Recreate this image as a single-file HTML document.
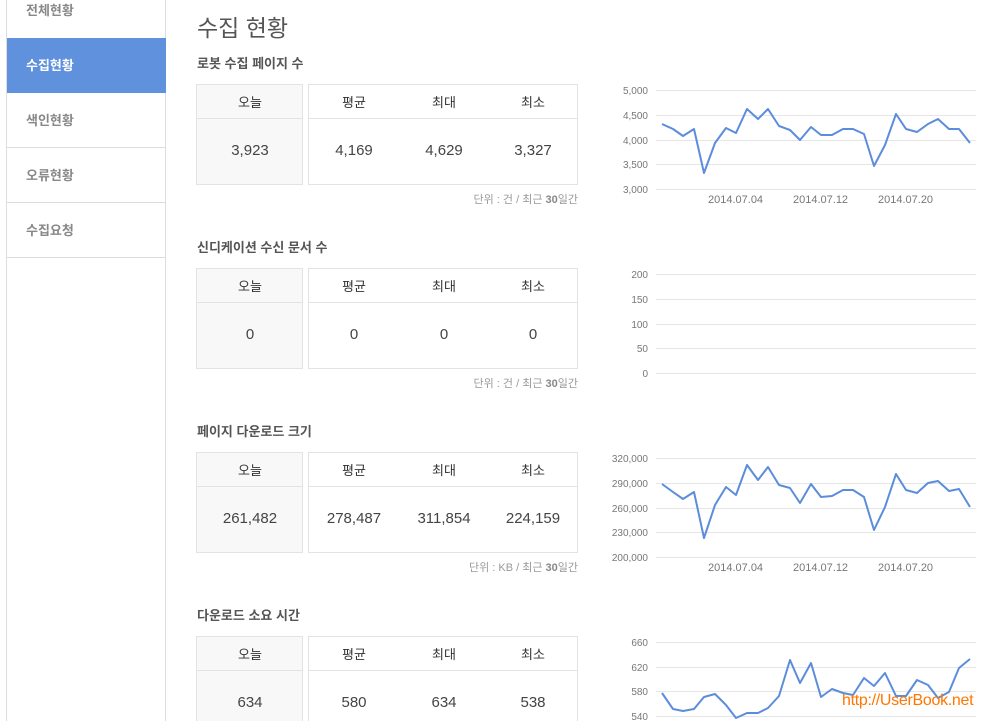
<!DOCTYPE html>
<html><head><meta charset="utf-8"><style>
*{margin:0;padding:0;box-sizing:border-box}
html,body{width:990px;height:721px;overflow:hidden}
body{background:#fff;position:relative;font-family:"Liberation Sans","Noto Sans CJK KR",sans-serif;color:#333}
.sb{position:absolute;left:6px;top:0;width:160px;height:721px;border-left:1px solid #ddd;border-right:1px solid #ddd}
.it{position:absolute;left:0;width:159px;height:55px;border-bottom:1px solid #ddd;font-size:13px;font-weight:bold;color:#888;padding-left:19px;line-height:55px}
.act{background:#5f91dd;color:#fff;border-bottom:none}
.t{position:absolute;left:197px;top:9px;font-size:23px;color:#555}
.h{position:absolute;left:197px;font-size:13px;font-weight:bold;color:#555}
.b1,.b2{position:absolute;border:1px solid #e3e3e3;height:101px}
.b1{left:196px;width:107px;background:#f8f8f8}
.b2{left:308px;width:270px}
.hr{position:absolute;left:0;right:0;top:33px;border-top:1px solid #e3e3e3}
.c{position:absolute;width:90px;text-align:center;font-size:13px;color:#333}
.v{font-size:15px;color:#444}
.n{position:absolute;right:412px;font-size:11px;color:#999}
.n b{color:#888}
svg{position:absolute;left:0;top:0}
.wm{position:absolute;left:842px;top:692px;font-size:16px;color:#ff7700;letter-spacing:-0.3px}
</style></head><body>
<div class="sb">
<div class="it" style="top:-17px;border-bottom:none">전체현황</div>
<div class="it act" style="top:38px">수집현황</div>
<div class="it" style="top:93px">색인현황</div>
<div class="it" style="top:148px">오류현황</div>
<div class="it" style="top:203px">수집요청</div>
</div>
<div class="t">수집 현황</div>

<div class="h" style="top:53px">로봇 수집 페이지 수</div>
<div class="b1" style="top:84px"><div class="hr"></div><div class="c" style="left:8px;top:7px">오늘</div><div class="c v" style="left:8px;top:57px">3,923</div></div>
<div class="b2" style="top:84px"><div class="hr"></div>
<div class="c" style="left:0;top:7px">평균</div><div class="c" style="left:90px;top:7px">최대</div><div class="c" style="left:179px;top:7px">최소</div>
<div class="c v" style="left:0;top:57px">4,169</div><div class="c v" style="left:90px;top:57px">4,629</div><div class="c v" style="left:179px;top:57px">3,327</div></div>
<div class="n" style="top:191px">단위 : 건 / 최근 <b>30</b>일간</div>

<div class="h" style="top:237px">신디케이션 수신 문서 수</div>
<div class="b1" style="top:268px"><div class="hr"></div><div class="c" style="left:8px;top:7px">오늘</div><div class="c v" style="left:8px;top:57px">0</div></div>
<div class="b2" style="top:268px"><div class="hr"></div>
<div class="c" style="left:0;top:7px">평균</div><div class="c" style="left:90px;top:7px">최대</div><div class="c" style="left:179px;top:7px">최소</div>
<div class="c v" style="left:0;top:57px">0</div><div class="c v" style="left:90px;top:57px">0</div><div class="c v" style="left:179px;top:57px">0</div></div>
<div class="n" style="top:375px">단위 : 건 / 최근 <b>30</b>일간</div>

<div class="h" style="top:421px">페이지 다운로드 크기</div>
<div class="b1" style="top:452px"><div class="hr"></div><div class="c" style="left:8px;top:7px">오늘</div><div class="c v" style="left:8px;top:57px">261,482</div></div>
<div class="b2" style="top:452px"><div class="hr"></div>
<div class="c" style="left:0;top:7px">평균</div><div class="c" style="left:90px;top:7px">최대</div><div class="c" style="left:179px;top:7px">최소</div>
<div class="c v" style="left:0;top:57px">278,487</div><div class="c v" style="left:90px;top:57px">311,854</div><div class="c v" style="left:179px;top:57px">224,159</div></div>
<div class="n" style="top:559px">단위 : KB / 최근 <b>30</b>일간</div>

<div class="h" style="top:605px">다운로드 소요 시간</div>
<div class="b1" style="top:636px"><div class="hr"></div><div class="c" style="left:8px;top:7px">오늘</div><div class="c v" style="left:8px;top:57px">634</div></div>
<div class="b2" style="top:636px"><div class="hr"></div>
<div class="c" style="left:0;top:7px">평균</div><div class="c" style="left:90px;top:7px">최대</div><div class="c" style="left:179px;top:7px">최소</div>
<div class="c v" style="left:0;top:57px">580</div><div class="c v" style="left:90px;top:57px">634</div><div class="c v" style="left:179px;top:57px">538</div></div>

<svg width="990" height="721" font-family="Liberation Sans, sans-serif" font-size="10" fill="#777">
<g stroke="#e6e6e6" stroke-width="1">
<path d="M656 90.5H976M656 115.5H976M656 140.5H976M656 164.5H976M656 189.5H976"/>
<path d="M656 274.5H976M656 299.5H976M656 324.5H976M656 348.5H976M656 373.5H976"/>
<path d="M656 458.5H976M656 483.5H976M656 508.5H976M656 532.5H976M656 557.5H976"/>
<path d="M656 642.5H976M656 667.5H976M656 691.5H976M656 716.5H976"/>
</g>
<g text-anchor="end">
<text x="648" y="94">5,000</text><text x="648" y="119">4,500</text><text x="648" y="144">4,000</text><text x="648" y="168">3,500</text><text x="648" y="193">3,000</text>
<text x="648" y="278">200</text><text x="648" y="303">150</text><text x="648" y="328">100</text><text x="648" y="352">50</text><text x="648" y="377">0</text>
<text x="648" y="462">320,000</text><text x="648" y="487">290,000</text><text x="648" y="512">260,000</text><text x="648" y="536">230,000</text><text x="648" y="561">200,000</text>
<text x="648" y="646">660</text><text x="648" y="671">620</text><text x="648" y="695">580</text><text x="648" y="720">540</text>
</g>
<g font-size="11" fill="#777">
<text x="708" y="203">2014.07.04</text><text x="793" y="203">2014.07.12</text><text x="878" y="203">2014.07.20</text>
<text x="708" y="571">2014.07.04</text><text x="793" y="571">2014.07.12</text><text x="878" y="571">2014.07.20</text>
</g>
<g fill="none" stroke="#5b8ddc" stroke-width="2" stroke-linejoin="round">
<polyline points="662,124 673,129 683,136 694,129 704,173 715,143 726,128 736,133 747,109 758,119 768,109 779,126 790,130 800,140 811,127 821,135 832,135 843,129 853,129 864,134 874,166 885,145 896,114 906,129 917,132 928,124 938,119 949,129 959,129 970,143"/>
<polyline points="662,484 673,492 683,499 694,492 704,538 715,505 726,487 736,495 747,465 758,480 768,467 779,485 790,488 800,503 811,484 821,497 832,496 843,490 853,490 864,497 874,530 885,507 896,474 906,490 917,493 928,483 938,481 949,491 959,489 970,507"/>
<polyline points="662,693 673,709 683,711 694,709 704,697 715,694 726,705 736,718 747,713 758,713 768,708 779,696 790,660 800,683 811,663 821,697 832,689 843,693 853,695 864,678 874,686 885,673 896,696 906,696 917,680 928,685 938,698 949,692 959,668 970,659"/>
</g>
</svg>
<div class="wm">http://UserBook.net</div>
</body></html>
